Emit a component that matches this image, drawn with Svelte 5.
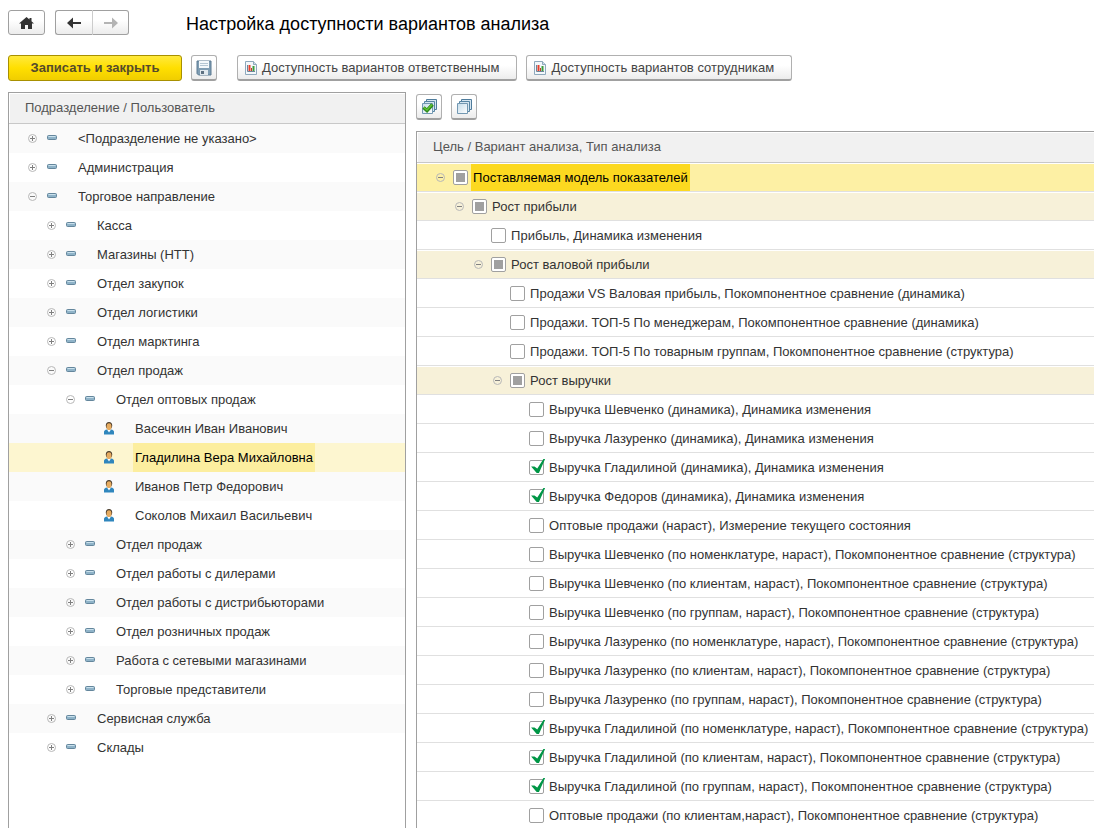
<script>
    const departments = [
        { level: 0, name: '<Подразделение не указано>', type: 'group' },
        { level: 0, name: 'Администрация', type: 'group' },
        { level: 0, name: 'Торговое направление', type: 'group', open: true },
        { level: 1, name: 'Касса', type: 'group' },
        { level: 1, name: 'Магазины (НТТ)', type: 'group' },
        { level: 1, name: 'Отдел закупок', type: 'group' },
        { level: 1, name: 'Отдел логистики', type: 'group' },
        { level: 1, name: 'Отдел марктинга', type: 'group' },
        { level: 1, name: 'Отдел продаж', type: 'group', open: true },
        { level: 2, name: 'Отдел оптовых продаж', type: 'group', open: true },
        { level: 3, name: 'Васечкин Иван Иванович', type: 'user' },
        { level: 3, name: 'Гладилина Вера Михайловна', type: 'user' },
        { level: 3, name: 'Иванов Петр Федорович', type: 'user' },
        { level: 3, name: 'Соколов Михаил Васильевич', type: 'user' },
        { level: 2, name: 'Отдел продаж', type: 'group' },
        { level: 2, name: 'Отдел работы с дилерами', type: 'group' },
        { level: 2, name: 'Отдел работы с дистрибьюторами', type: 'group' },
        { level: 2, name: 'Отдел розничных продаж', type: 'group' },
        { level: 2, name: 'Работа с сетевыми магазинами', type: 'group' },
        { level: 2, name: 'Торговые представители', type: 'group' },
        { level: 1, name: 'Сервисная служба', type: 'group' },
        { level: 1, name: 'Склады', type: 'group' },
    ];

    const variants = [
        { level: 0, name: 'Поставляемая модель показателей', goal: true, open: true },
        { level: 1, name: 'Рост прибыли', goal: true, open: true },
        { level: 2, name: 'Прибыль, Динамика изменения' },
        { level: 2, name: 'Рост валовой прибыли', goal: true, open: true },
        { level: 3, name: 'Продажи VS Валовая прибыль, Покомпонентное сравнение (динамика)' },
        { level: 3, name: 'Продажи. ТОП-5 По менеджерам, Покомпонентное сравнение (динамика)' },
        { level: 3, name: 'Продажи. ТОП-5 По товарным группам, Покомпонентное сравнение (структура)' },
        { level: 3, name: 'Рост выручки', goal: true, open: true },
        { level: 4, name: 'Выручка Шевченко (динамика), Динамика изменения' },
        { level: 4, name: 'Выручка Лазуренко (динамика), Динамика изменения' },
        { level: 4, name: 'Выручка Гладилиной (динамика), Динамика изменения', checked: true },
        { level: 4, name: 'Выручка Федоров (динамика), Динамика изменения', checked: true },
        { level: 4, name: 'Оптовые продажи (нараст), Измерение текущего состояния' },
        { level: 4, name: 'Выручка Шевченко (по номенклатуре, нараст), Покомпонентное сравнение (структура)' },
        { level: 4, name: 'Выручка Шевченко (по клиентам, нараст), Покомпонентное сравнение (структура)' },
        { level: 4, name: 'Выручка Шевченко (по группам, нараст), Покомпонентное сравнение (структура)' },
        { level: 4, name: 'Выручка Лазуренко (по номенклатуре, нараст), Покомпонентное сравнение (структура)' },
        { level: 4, name: 'Выручка Лазуренко (по клиентам, нараст), Покомпонентное сравнение (структура)' },
        { level: 4, name: 'Выручка Лазуренко (по группам, нараст), Покомпонентное сравнение (структура)' },
        { level: 4, name: 'Выручка Гладилиной (по номенклатуре, нараст), Покомпонентное сравнение (структура)', checked: true },
        { level: 4, name: 'Выручка Гладилиной (по клиентам, нараст), Покомпонентное сравнение (структура)', checked: true },
        { level: 4, name: 'Выручка Гладилиной (по группам, нараст), Покомпонентное сравнение (структура)', checked: true },
        { level: 4, name: 'Оптовые продажи (по клиентам,нараст), Покомпонентное сравнение (структура)' },
    ];

    let tree = $state(departments);
    let list = $state(variants.map((v) => ({ checked: false, mixed: !!v.goal, ...v })));
    let currentUser = $state(departments[11].name);
    let currentVariant = $state(variants[0].name);

    // rows that are not inside a collapsed parent
    function visible(items) {
        let limit = Infinity;
        return items.filter((item) => {
            if (item.level > limit) return false;
            limit = 'open' in item && !item.open ? item.level : Infinity;
            return true;
        });
    }

    function setAll(value) {
        for (const item of list) {
            item.checked = value;
            item.mixed = false;
        }
    }
</script>

{#snippet toggle(item)}
    <button class="toggle" type="button" aria-label={item.open ? 'Свернуть' : 'Развернуть'} onclick={() => (item.open = !item.open)}>
        <svg width="9" height="9" viewBox="0 0 9 9">
            <circle cx="4.5" cy="4.5" r="4" fill="none" stroke="#b8b8b8" />
            <path d={item.open ? 'M2 4.5h5' : 'M2 4.5h5M4.5 2v5'} stroke="#808080" />
        </svg>
    </button>
{/snippet}

{#snippet report()}
    <svg width="12" height="14" viewBox="0 0 12 14">
        <path d="M.5.5h8l3 3v10H.5z" fill="#f4f8fb" stroke="#8fa9bd" />
        <path d="M8.5.5v3h3" fill="#cfdde8" stroke="#8fa9bd" />
        <path d="M2.5 4v6.5H10" fill="none" stroke="#6d8598" />
        <path d="M4.5 4v6" stroke="#e8402c" stroke-width="2" />
        <path d="M6.5 7v3" stroke="#c03c2c" />
        <path d="M8.5 5v5" stroke="#3c9c3c" stroke-width="2" />
    </svg>
{/snippet}

{#snippet sheets()}
    <path d="M5.5 1.5h10v10h-10z" fill="#d5e5f0" stroke="#4f7c9c" />
    <path d="M3.5 3.5h10v10h-10z" fill="#d5e5f0" stroke="#5684a3" />
    <path d="M1.5 5.5h10v10h-10z" fill="url(#sheet)" stroke="#7398b2" />
{/snippet}

<div class="app">
    <header class="head">
        <button class="btn home" type="button" aria-label="Домой">
            <svg width="15" height="12" viewBox="0 0 15 12">
                <path d="M7.5 0 0 6.5h2V12h4V8h3v4h4V6.5h2L12.5 4.3V1h-2v1.6z" fill="#333" />
            </svg>
        </button>
        <div class="history">
            <button class="btn" type="button" aria-label="Назад">
                <svg width="15" height="12" viewBox="0 0 15 12">
                    <path d="M0 6 6 .5V5h8v2H6v4.5z" fill="#333" />
                </svg>
            </button>
            <button class="btn" type="button" aria-label="Вперед">
                <svg width="15" height="12" viewBox="0 0 15 12">
                    <path d="M15 6 9 .5V5H1v2h8v4.5z" fill="#b4b4b4" />
                </svg>
            </button>
        </div>
        <h1>Настройка доступности вариантов анализа</h1>
    </header>

    <div class="commands">
        <button class="btn primary" type="button">Записать и закрыть</button>
        <button class="btn square" type="button" aria-label="Записать">
            <svg width="16" height="16" viewBox="0 0 16 16">
                <path d="M1 1h14v14H2.5L1 13.5z" fill="#7f9db3" stroke="#5c7b92" />
                <path d="M3 1h10v7H3z" fill="#f3f8fb" />
                <path d="M4 3.5h8M4 5.5h8" stroke="#b4c6d3" />
                <path d="M4 10h8v5H4z" fill="#e1e8ed" />
                <path d="M5 11h3v3H5z" fill="#5d7080" />
            </svg>
        </button>
        <button class="btn wide" type="button">{@render report()}Доступность вариантов ответственным</button>
        <button class="btn wide" type="button">{@render report()}Доступность вариантов сотрудникам</button>
    </div>

    <main>
        <section class="pane">
            <h2>Подразделение / Пользователь</h2>
            <ul>
                {#each visible(tree) as item (item)}
                <li class="row user-row" class:current={item.name === currentUser}>
                    <span class="indent" style="width: {item.level * 19}px"></span>
                    <span class="toggle-cell">
                        {#if item.type === 'group'}
                            {@render toggle(item)}
                        {/if}
                    </span>
                    <span class="kind">
                        {#if item.type === 'group'}
                        <svg width="10" height="7" viewBox="0 0 10 7">
                            <rect x=".5" y=".5" width="9" height="4" rx="1" fill="#8fb3c8" stroke="#64869c" />
                            <path d="M1.5 1.5h7" stroke="#c9e0ec" />
                        </svg>
                        {:else}
                        <svg width="10" height="13" viewBox="0 0 10 13">
                            <path d="M0 12.5V10q0-2 3-2.500h4q3 .5 3 2.500v2.500z" fill="#2f86bd" />
                            <path d="M3 7.500h4L5 10.500z" fill="#fff" />
                            <ellipse cx="5" cy="3.500" rx="3.200" ry="3.500" fill="#4a3c2c" />
                            <ellipse cx="5" cy="4.700" rx="2.500" ry="3.400" fill="#e6ab60" />
                        </svg>
                        {/if}
                    </span>
                    <button class="name" type="button" onclick={() => (currentUser = item.name)}>{item.name}</button>
                </li>
                {/each}
            </ul>
        </section>

        <div class="right">
            <div class="tools">
                <button class="btn square" type="button" aria-label="Установить все флажки" onclick={() => setAll(true)}>
                    <svg width="17" height="17" viewBox="0 0 17 17">
                        <defs>
                            <linearGradient id="sheet" x2="1" y2="1">
                                <stop offset="0" stop-color="#c5dcea" />
                                <stop offset="1" stop-color="#fff" />
                            </linearGradient>
                        </defs>
                        {@render sheets()}
                        <path d="m2.500 9.500 3.500 3L11.500 6.500" fill="none" stroke="#2f8a1c" stroke-width="3.500" />
                        <path d="m3 9.500 3 2.500L11 6.500" fill="none" stroke="#5fc435" stroke-width="1.500" />
                    </svg>
                </button>
                <button class="btn square" type="button" aria-label="Снять все флажки" onclick={() => setAll(false)}>
                    <svg width="17" height="17" viewBox="0 0 17 17">
                        {@render sheets()}
                    </svg>
                </button>
            </div>
            <section class="pane">
                <h2>Цель / Вариант анализа, Тип анализа</h2>
                <ul>
                    {#each visible(list) as item (item)}
                    <li class="row variant-row" class:goal={item.goal} class:current={item.name === currentVariant}>
                        <span class="indent" style="width: {item.level * 19}px"></span>
                        <span class="toggle-cell">
                            {#if item.goal}
                                {@render toggle(item)}
                            {/if}
                        </span>
                        <input type="checkbox" aria-label={item.name} bind:checked={item.checked} bind:indeterminate={item.mixed} />
                        <button class="name" type="button" onclick={() => (currentVariant = item.name)}>{item.name}</button>
                    </li>
                    {/each}
                </ul>
            </section>
        </div>
    </main>
</div>

<style>
    :global(body) {
        background: #fff;
    }

    .app {
        box-sizing: border-box;
        display: flex;
        flex-direction: column;
        height: 100vh;
        padding: 10px 0 0 8px;
        overflow: hidden;
        font-family: "Liberation Sans", Arial, sans-serif;
        font-size: 13px;
        color: #333;
    }

    button {
        font: inherit;
        color: inherit;
        cursor: pointer;
    }

    svg {
        display: block;
        flex: none;
    }

    .head {
        display: flex;
        align-items: flex-start;
        gap: 10px;
        height: 25px;
    }

    h1 {
        margin: 0 0 0 47px;
        font-size: 18px;
        font-weight: normal;
        line-height: 28px;
        color: #000;
    }

    .btn {
        box-sizing: border-box;
        display: flex;
        align-items: center;
        justify-content: center;
        height: 26px;
        padding: 0;
        border: 1px solid #b0b0b0;
        border-bottom: 2px solid #a0a0a0;
        border-radius: 3px;
        background: linear-gradient(#fff 40%, #ececec);
        color: #444;
        white-space: nowrap;
    }

    .head .btn {
        width: 37px;
        height: 25px;
        border: 1px solid #a0a0a0;
    }

    .history {
        display: flex;
    }

    .history .btn:first-child {
        border-right: 0;
        border-radius: 3px 0 0 3px;
    }

    .history .btn:last-child {
        border-left-color: #ccc;
        border-radius: 0 3px 3px 0;
    }

    .commands {
        display: flex;
        gap: 9px;
        margin-top: 20px;
    }

    .btn.primary {
        padding: 0 20px 2px;
        min-width: 174px;
        border: 1px solid #a89000;
        background: linear-gradient(#ffe93c, #ffdf00 50%, #f0cd00);
        font-weight: bold;
        color: #544a2c;
    }

    .btn.square {
        width: 26px;
    }

    .btn.wide {
        gap: 5px;
        padding: 0 17px 0 7px;
    }

    .square + .wide {
        margin-left: 11px;
    }

    main {
        display: grid;
        grid-template-columns: 37fr 63fr;
        gap: 10px;
        flex: 1;
        min-height: 0;
        margin-top: 11px;
    }

    .right {
        display: flex;
        flex-direction: column;
        min-width: 0;
        min-height: 0;
    }

    .tools {
        display: flex;
        gap: 9px;
        padding: 2px 0 11px;
    }

    .pane {
        flex: 1;
        min-width: 0;
        min-height: 0;
        overflow: hidden;
        border: 1px solid #a0a0a0;
        border-bottom: 0;
    }

    .right .pane {
        border-right: 0;
    }

    h2 {
        margin: 0;
        padding: 0 15px 2px;
        border: 1px solid #fff;
        border-right: 0;
        border-bottom: 0;
        background: #f1f1f1;
        box-shadow: 0 1px #c8c8c8;
        font-size: 13px;
        font-weight: normal;
        line-height: 27px;
        color: #555;
    }

    ul {
        margin: 1px 0 0;
        padding: 0;
        list-style: none;
    }

    .row {
        box-sizing: border-box;
        display: flex;
        align-items: center;
        height: 29px;
        padding-left: 19px;
        white-space: nowrap;
    }

    .indent {
        flex: none;
    }

    .toggle-cell {
        flex: none;
        width: 18px;
    }

    .toggle {
        display: block;
        padding: 0 0 1px;
        border: 0;
        background: none;
    }

    .kind {
        display: flex;
        flex: none;
        justify-content: center;
        width: 12px;
        margin-right: 18px;
    }

    .name {
        align-self: stretch;
        padding: 0 2px;
        border: 0;
        background: none;
    }

    .user-row:nth-child(odd) {
        background: #fafafa;
    }

    .user-row.current {
        background: #fdf6d0;
    }

    .user-row.current .name {
        background: #fcee9f;
        color: #000;
    }

    .variant-row {
        border-top: 1px solid #fff;
        border-bottom: 1px solid #e0e0e0;
    }

    .variant-row.goal {
        background: #f7f1d9;
    }

    .variant-row.current {
        background: #fdf0a4;
    }

    .variant-row.current .name {
        background: #fcd920;
        color: #000;
    }

    input {
        appearance: none;
        position: relative;
        box-sizing: border-box;
        flex: none;
        width: 15px;
        height: 15px;
        margin: 0 3px 0 -1px;
        border: 1px solid #a0a0a0;
        border-radius: 2px;
        background: #fff;
    }

    input:indeterminate::before {
        content: "";
        position: absolute;
        inset: 2px;
        background: #a0a0a0;
    }

    input:checked::before {
        content: "";
        position: absolute;
        inset: -2px -2px 0 1px;
        background: #009646;
        clip-path: polygon(0 50%, 24% 50%, 44% 64%, 88% 0, 100% 0, 56% 94%, 40% 94%);
    }
</style>
